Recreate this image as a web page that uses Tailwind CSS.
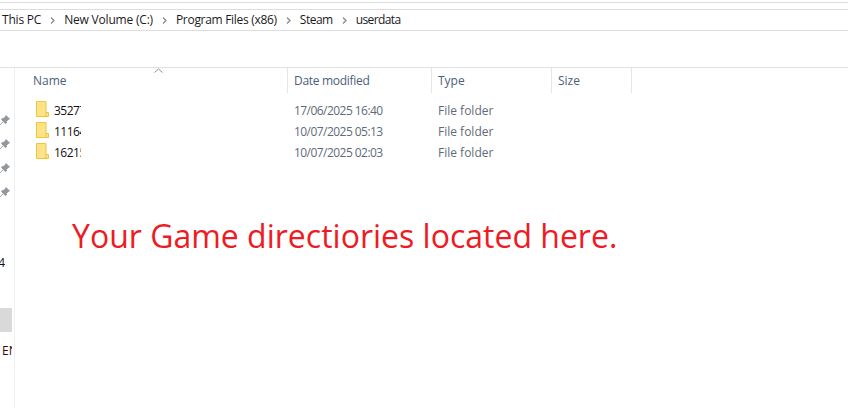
<!DOCTYPE html>
<html lang="en">
<head>
  <meta charset="UTF-8">
  <title>userdata</title>
  <script src="https://cdn.jsdelivr.net/npm/@tailwindcss/browser@4"></script>
</head>
<body class="bg-white font-['Open_Sans','Noto_Sans',sans-serif] text-[12px] overflow-hidden">
  <div class="relative w-[848px] h-[408px] flex flex-col overflow-hidden">
    <!-- toolbar edges -->
    <div class="h-[3px] border-b border-[#dcdcdc] shrink-0"></div>
    <div class="h-[7px] border-b border-[#dcdcdc] shrink-0"></div>

    <!-- address bar -->
    <div class="h-[21px] border-b border-[#dcdcdc] shrink-0 flex items-center pl-[2px] text-[#1a1a1a] tracking-[-0.2px]">
      <span>This PC</span>
      <span class="w-[23px] flex justify-center"><svg width="5" height="7" viewBox="0 0 5 7"><path d="M1 0.5 4 3.5 1 6.5" fill="none" stroke="#8a8a8a" stroke-width="1.3"/></svg></span>
      <span>New Volume (C:)</span>
      <span class="w-[23px] flex justify-center"><svg width="5" height="7" viewBox="0 0 5 7"><path d="M1 0.5 4 3.5 1 6.5" fill="none" stroke="#8a8a8a" stroke-width="1.3"/></svg></span>
      <span class="tracking-[-0.3px]">Program Files (x86)</span>
      <span class="w-[23px] flex justify-center"><svg width="5" height="7" viewBox="0 0 5 7"><path d="M1 0.5 4 3.5 1 6.5" fill="none" stroke="#8a8a8a" stroke-width="1.3"/></svg></span>
      <span class="tracking-[-0.5px]">Steam</span>
      <span class="w-[23px] flex justify-center"><svg width="5" height="7" viewBox="0 0 5 7"><path d="M1 0.5 4 3.5 1 6.5" fill="none" stroke="#8a8a8a" stroke-width="1.3"/></svg></span>
      <span class="tracking-[-0.6px]">userdata</span>
    </div>

    <div class="h-[36px] shrink-0"></div>

    <div class="flex flex-1 border-t border-[#e0e0e0]">
      <!-- nav pane, cut off at the left edge -->
      <div class="w-[15px] shrink-0 border-r border-[#efefef] flex flex-col overflow-hidden text-[#111]">
        <div class="h-[47px] shrink-0"></div>
        <div class="flex flex-col gap-[14px] h-[110px] shrink-0">
          <svg class="shrink-0" width="10" height="10" viewBox="0 0 10 10"><path d="M6 0.5 9.5 4 8.2 4.6 6.6 6.2 6.4 8 5.2 8.4 1.6 4.8 2 3.6 3.8 3.4 5.4 1.8Z M3 7 0 10" fill="#8f969c" stroke="#8f969c" stroke-width="0.8"/></svg>
          <svg class="shrink-0" width="10" height="10" viewBox="0 0 10 10"><path d="M6 0.5 9.5 4 8.2 4.6 6.6 6.2 6.4 8 5.2 8.4 1.6 4.8 2 3.6 3.8 3.4 5.4 1.8Z M3 7 0 10" fill="#8f969c" stroke="#8f969c" stroke-width="0.8"/></svg>
          <svg class="shrink-0" width="10" height="10" viewBox="0 0 10 10"><path d="M6 0.5 9.5 4 8.2 4.6 6.6 6.2 6.4 8 5.2 8.4 1.6 4.8 2 3.6 3.8 3.4 5.4 1.8Z M3 7 0 10" fill="#8f969c" stroke="#8f969c" stroke-width="0.8"/></svg>
          <svg class="shrink-0" width="10" height="10" viewBox="0 0 10 10"><path d="M6 0.5 9.5 4 8.2 4.6 6.6 6.2 6.4 8 5.2 8.4 1.6 4.8 2 3.6 3.8 3.4 5.4 1.8Z M3 7 0 10" fill="#8f969c" stroke="#8f969c" stroke-width="0.8"/></svg>
        </div>
        <div class="h-[29px] shrink-0"></div>
        <div class="h-[18px] shrink-0 w-[5px] overflow-hidden flex justify-end items-center leading-none"><span>4</span></div>
        <div class="h-[36px] shrink-0"></div>
        <div class="h-[24px] w-[12px] shrink-0 bg-[#d9d9d9]"></div>
        <div class="h-[8px] shrink-0"></div>
        <div class="h-[22px] w-[12px] shrink-0 overflow-hidden flex items-center leading-none text-[#3a0a0a] pl-[2px]"><span>EN</span></div>
      </div>

      <!-- file list -->
      <div class="flex-1 min-w-0">
        <div class="relative flex h-[25px] text-[#4c607a]">
          <svg class="absolute left-[139px] top-0" width="9" height="5" viewBox="0 0 9 5"><path d="M0.5 4.5 4.5 1 8.5 4.5" fill="none" stroke="#8f8f8f"/></svg>
          <div class="w-[273px] pl-[18px] pt-[4px] border-r border-[#e5e5e5]">Name</div>
          <div class="w-[144px] pl-[6px] pt-[4px] border-r border-[#e5e5e5] tracking-[-0.3px]">Date modified</div>
          <div class="w-[120px] pl-[6px] pt-[4px] border-r border-[#e5e5e5]">Type</div>
          <div class="w-[80px] pl-[6px] pt-[4px] border-r border-[#e5e5e5]">Size</div>
        </div>

        <div class="pt-[7px] flex flex-col text-[#5f6b78]">
          <div class="flex h-[21px] items-center">
            <div class="w-[272px] pl-[21px] flex items-center">
              <svg class="shrink-0 mb-[3px]" width="13" height="16" viewBox="0 0 13 16"><path d="M.5.5H10V11.5H12.5V15.5H.5Z" fill="#fde287" stroke="#eac73f"/><path d="M10 11.5V15.5" stroke="#eac73f"/></svg>
              <span class="ml-[5px] w-[27px] overflow-hidden whitespace-nowrap text-[#111] tracking-[-0.5px]">352770</span>
            </div>
            <div class="w-[144px] pl-[7px] tracking-[-0.55px]">17/06/2025 16:40</div>
            <div class="w-[120px] pl-[7px]">File folder</div>
          </div>
          <div class="flex h-[21px] items-center">
            <div class="w-[272px] pl-[21px] flex items-center">
              <svg class="shrink-0 mb-[3px]" width="13" height="16" viewBox="0 0 13 16"><path d="M.5.5H10V11.5H12.5V15.5H.5Z" fill="#fde287" stroke="#eac73f"/><path d="M10 11.5V15.5" stroke="#eac73f"/></svg>
              <span class="ml-[5px] w-[27px] overflow-hidden whitespace-nowrap text-[#111] tracking-[-0.5px]">111640</span>
            </div>
            <div class="w-[144px] pl-[7px] tracking-[-0.55px]">10/07/2025 05:13</div>
            <div class="w-[120px] pl-[7px]">File folder</div>
          </div>
          <div class="flex h-[21px] items-center">
            <div class="w-[272px] pl-[21px] flex items-center">
              <svg class="shrink-0 mb-[3px]" width="13" height="16" viewBox="0 0 13 16"><path d="M.5.5H10V11.5H12.5V15.5H.5Z" fill="#fde287" stroke="#eac73f"/><path d="M10 11.5V15.5" stroke="#eac73f"/></svg>
              <span class="ml-[5px] w-[27px] overflow-hidden whitespace-nowrap text-[#111] tracking-[-0.5px]">162150</span>
            </div>
            <div class="w-[144px] pl-[7px] tracking-[-0.55px]">10/07/2025 02:03</div>
            <div class="w-[120px] pl-[7px]">File folder</div>
          </div>
        </div>
      </div>
    </div>

    <!-- annotation drawn over the screenshot -->
    <div class="absolute left-[72px] top-[214px] text-[32px] leading-[44px] text-[#ed1c24] whitespace-nowrap">Your Game directiories located here.</div>
  </div>
</body>
</html>
